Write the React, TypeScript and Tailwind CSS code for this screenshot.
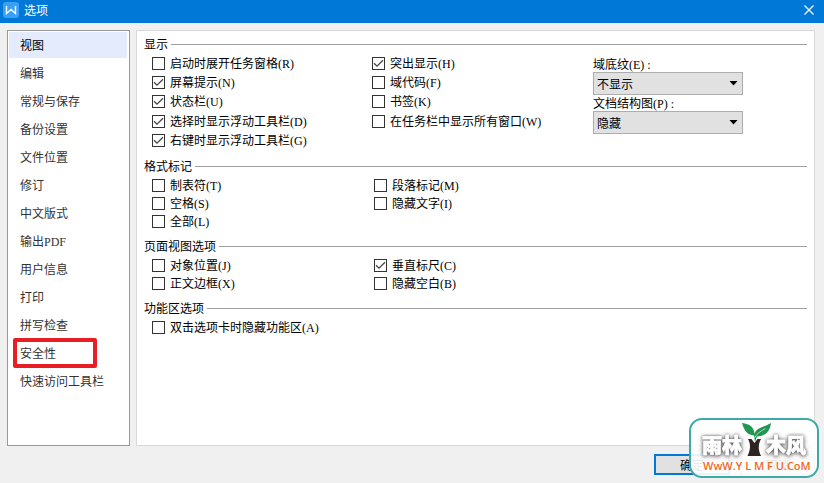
import { useState } from "react";
import type { ReactNode } from "react";

type Option = { id: string; label: string; hotkey: string; checked?: boolean };

const NAV_ITEMS = [
  "视图", "编辑", "常规与保存", "备份设置", "文件位置", "修订", "中文版式",
  "输出PDF", "用户信息", "打印", "拼写检查", "安全性", "快速访问工具栏",
];

const DISPLAY_LEFT: Option[] = [
  { id: "taskpane", label: "启动时展开任务窗格", hotkey: "(R)" },
  { id: "screentip", label: "屏幕提示", hotkey: "(N)", checked: true },
  { id: "statusbar", label: "状态栏", hotkey: "(U)", checked: true },
  { id: "select-toolbar", label: "选择时显示浮动工具栏", hotkey: "(D)", checked: true },
  { id: "context-toolbar", label: "右键时显示浮动工具栏", hotkey: "(G)", checked: true },
];

const DISPLAY_RIGHT: Option[] = [
  { id: "highlight", label: "突出显示", hotkey: "(H)", checked: true },
  { id: "fieldcode", label: "域代码", hotkey: "(F)" },
  { id: "bookmark", label: "书签", hotkey: "(K)" },
  { id: "taskbar", label: "在任务栏中显示所有窗口", hotkey: "(W)" },
];

const MARKS_LEFT: Option[] = [
  { id: "tab", label: "制表符", hotkey: "(T)" },
  { id: "space", label: "空格", hotkey: "(S)" },
  { id: "all", label: "全部", hotkey: "(L)" },
];

const MARKS_RIGHT: Option[] = [
  { id: "paragraph", label: "段落标记", hotkey: "(M)" },
  { id: "hidden-text", label: "隐藏文字", hotkey: "(I)" },
];

const PAGE_LEFT: Option[] = [
  { id: "object", label: "对象位置", hotkey: "(J)" },
  { id: "border", label: "正文边框", hotkey: "(X)" },
];

const PAGE_RIGHT: Option[] = [
  { id: "ruler", label: "垂直标尺", hotkey: "(C)", checked: true },
  { id: "blank", label: "隐藏空白", hotkey: "(B)" },
];

const RIBBON: Option[] = [{ id: "ribbon", label: "双击选项卡时隐藏功能区", hotkey: "(A)" }];

function Hotkey({ children }: { children: ReactNode }) {
  return <span className="font-['Liberation_Serif',serif]">{children}</span>;
}

function CheckOption({ option }: { option: Option }) {
  return (
    <label htmlFor={option.id} className="flex h-[18px] items-center gap-[5px] whitespace-nowrap">
      <span className="relative flex">
        <input id={option.id} type="checkbox" defaultChecked={option.checked} className="peer size-[13px] appearance-none border border-[#333] bg-white" />
        <svg viewBox="0 0 13 13" className="pointer-events-none absolute inset-0 hidden size-[13px] peer-checked:block" fill="none" stroke="#444" strokeWidth="1.3">
          <path d="M2 6.2 5 9.2 11 3.2" />
        </svg>
      </span>
      <span>{option.label}<Hotkey>{option.hotkey}</Hotkey></span>
    </label>
  );
}

function OptionColumn({ options }: { options: Option[] }) {
  return (
    <div>
      {options.map((o) => <CheckOption key={o.id} option={o} />)}
    </div>
  );
}

function Section({ title, children }: { title: string; children: ReactNode }) {
  return (
    <section>
      <div className="mb-[2px] flex h-4 items-center gap-[3px]">
        <h2>{title}</h2>
        <span className="h-px flex-1 bg-[#a0a0a0]" />
      </div>
      <div className="pl-2">{children}</div>
    </section>
  );
}

function SelectField({ id, label, hotkey, options }: { id: string; label: string; hotkey: string; options: string[] }) {
  return (
    <div>
      <label htmlFor={id} className="block h-4 leading-4">{label}<Hotkey>{hotkey} :</Hotkey></label>
      <div className="relative w-[150px]">
        <select id={id} className="block h-[23px] w-full appearance-none border border-[#adadad] bg-[#e1e1e1] pl-[3px] leading-[20px]">
          {options.map((o) => <option key={o}>{o}</option>)}
        </select>
        <svg viewBox="0 0 9 5" className="pointer-events-none absolute top-[9px] right-[5px] h-[5px] w-[9px]">
          <path d="M0.5 0h8L4.5 4.5z" fill="#000" />
        </svg>
      </div>
    </div>
  );
}

function Watermark() {
  return (
    <svg viewBox="0 0 130 60" className="pointer-events-none absolute right-[5px] bottom-[5px] h-[60px] w-[130px]">
      <defs>
        <filter id="glow" x="-20%" y="-40%" width="140%" height="190%">
          <feDropShadow dx="0" dy="0" stdDeviation="1" floodColor="#555" floodOpacity="0.8" />
          <feDropShadow dx="0" dy="1" stdDeviation="2" floodColor="#444" floodOpacity="0.8" />
        </filter>
      </defs>
      <rect x="1" y="1" width="128" height="58" rx="12" fill="#fff" fillOpacity="0.91" stroke="#3fa9a6" strokeWidth="2" />
      <g filter="url(#glow)" fill="#fff" stroke="#fff" strokeWidth="0.5" strokeLinejoin="round" fontSize="20" fontWeight="900" fontFamily="'Noto Sans CJK SC', sans-serif">
        <text x="13" y="35">雨林</text>
        <text x="77" y="35">木风</text>
      </g>
      <path d="M59 21h3.500l3 4 3-4H72c-3 5-3 11 0 17H58.500c3-6 3.500-12 .5-17z" fill="#2d2522" />
      <path d="M53 5c8 1 12 4 12.500 11C67 10 73 10 82 5c-1 9-6 13-14 13.500L66 24l-1-6.500C58 17 55 12 53 5z" fill="#219653" />
      <path d="M65.500 20c2-4 6-7 11-9.500" fill="none" stroke="#fff" strokeWidth="0.6" />
      <text x="14" y="52" fill="#ee6a1f" fontSize="11" fontWeight="600" fontFamily="'Open Sans', sans-serif">WwW.Y L M F U.CoM</text>
    </svg>
  );
}

export default function App() {
  const [active, setActive] = useState("视图");

  return (
    <div className="relative flex min-h-screen flex-col bg-[#f0f0f0] font-['Noto_Sans_CJK_SC',sans-serif] text-[12px] leading-4 text-black">
      <header className="flex h-[23px] items-center bg-[#0078d7] pr-[10px] pb-[3px] pl-[3px] text-white">
        <svg viewBox="0 0 16 16" className="mr-[5px] size-4">
          <rect width="16" height="16" rx="3" fill="#3aa0f5" />
          <path d="M3.500 4v7.500L8 7.500l4.500 4V4" fill="none" stroke="#fff" strokeWidth="1.4" />
        </svg>
        <h1 className="flex-1">选项</h1>
        <button type="button" aria-label="关闭">
          <svg viewBox="0 0 10 10" className="size-[10px]" fill="none" stroke="#fff" strokeWidth="1.2">
            <path d="M0.500 0.500 9.500 9.500M9.500 0.500 0.500 9.500" />
          </svg>
        </button>
      </header>

      <div className="flex flex-1 gap-[6px] pt-[7px] pr-[9px] pl-[7px]">
        <nav className="flex w-[123px] flex-col gap-[2px] border border-[#999] bg-white py-px pr-[2px] pl-px">
          {NAV_ITEMS.map((item) => (
            <button
              key={item}
              type="button"
              onClick={() => setActive(item)}
              className={`relative h-[26px] pl-[11px] text-left ${active === item ? "bg-[#e3ebfd]" : "text-[#333]"}`}
            >
              {item === "输出PDF" ? <>输出<Hotkey>PDF</Hotkey></> : item}
              {item === "安全性" && <span className="absolute -top-[2px] left-[4px] h-[30px] w-[84px] rounded-[2px] border-4 border-[#e81e25]" />}
            </button>
          ))}
        </nav>

        <main className="flex flex-1 flex-col gap-2 border border-[#d9d9d9] bg-white pt-[5px] pr-[7px] pl-[7px]">
          <Section title="显示">
            <div className="grid grid-cols-[220fr_221fr_214fr]">
              <div className="grid min-h-[96px] grid-rows-5 items-center">
                {DISPLAY_LEFT.map((o) => <CheckOption key={o.id} option={o} />)}
              </div>
              <div className="grid min-h-[96px] grid-rows-5 items-center">
                {DISPLAY_RIGHT.map((o) => <CheckOption key={o.id} option={o} />)}
              </div>
              <div className="pt-[2px]">
                <SelectField id="shading" label="域底纹" hotkey="(E)" options={["不显示", "显示"]} />
                <SelectField id="docmap" label="文档结构图" hotkey="(P)" options={["隐藏", "显示"]} />
              </div>
            </div>
          </Section>

          <Section title="格式标记">
            <div className="grid grid-cols-[222fr_433fr]">
              <OptionColumn options={MARKS_LEFT} />
              <OptionColumn options={MARKS_RIGHT} />
            </div>
          </Section>

          <Section title="页面视图选项">
            <div className="grid grid-cols-[222fr_433fr]">
              <OptionColumn options={PAGE_LEFT} />
              <OptionColumn options={PAGE_RIGHT} />
            </div>
          </Section>

          <Section title="功能区选项">
            <OptionColumn options={RIBBON} />
          </Section>
        </main>
      </div>

      <footer className="flex justify-end gap-[10px] pt-[8px] pr-[9px] pb-[8px]">
        <button type="button" className="h-[21px] w-[76px] border-2 border-[#0078d7] bg-[#e1e1e1]">确定</button>
        <button type="button" className="h-[21px] w-[75px] border border-[#adadad] bg-[#e1e1e1]">取消</button>
      </footer>

      <Watermark />
    </div>
  );
}
